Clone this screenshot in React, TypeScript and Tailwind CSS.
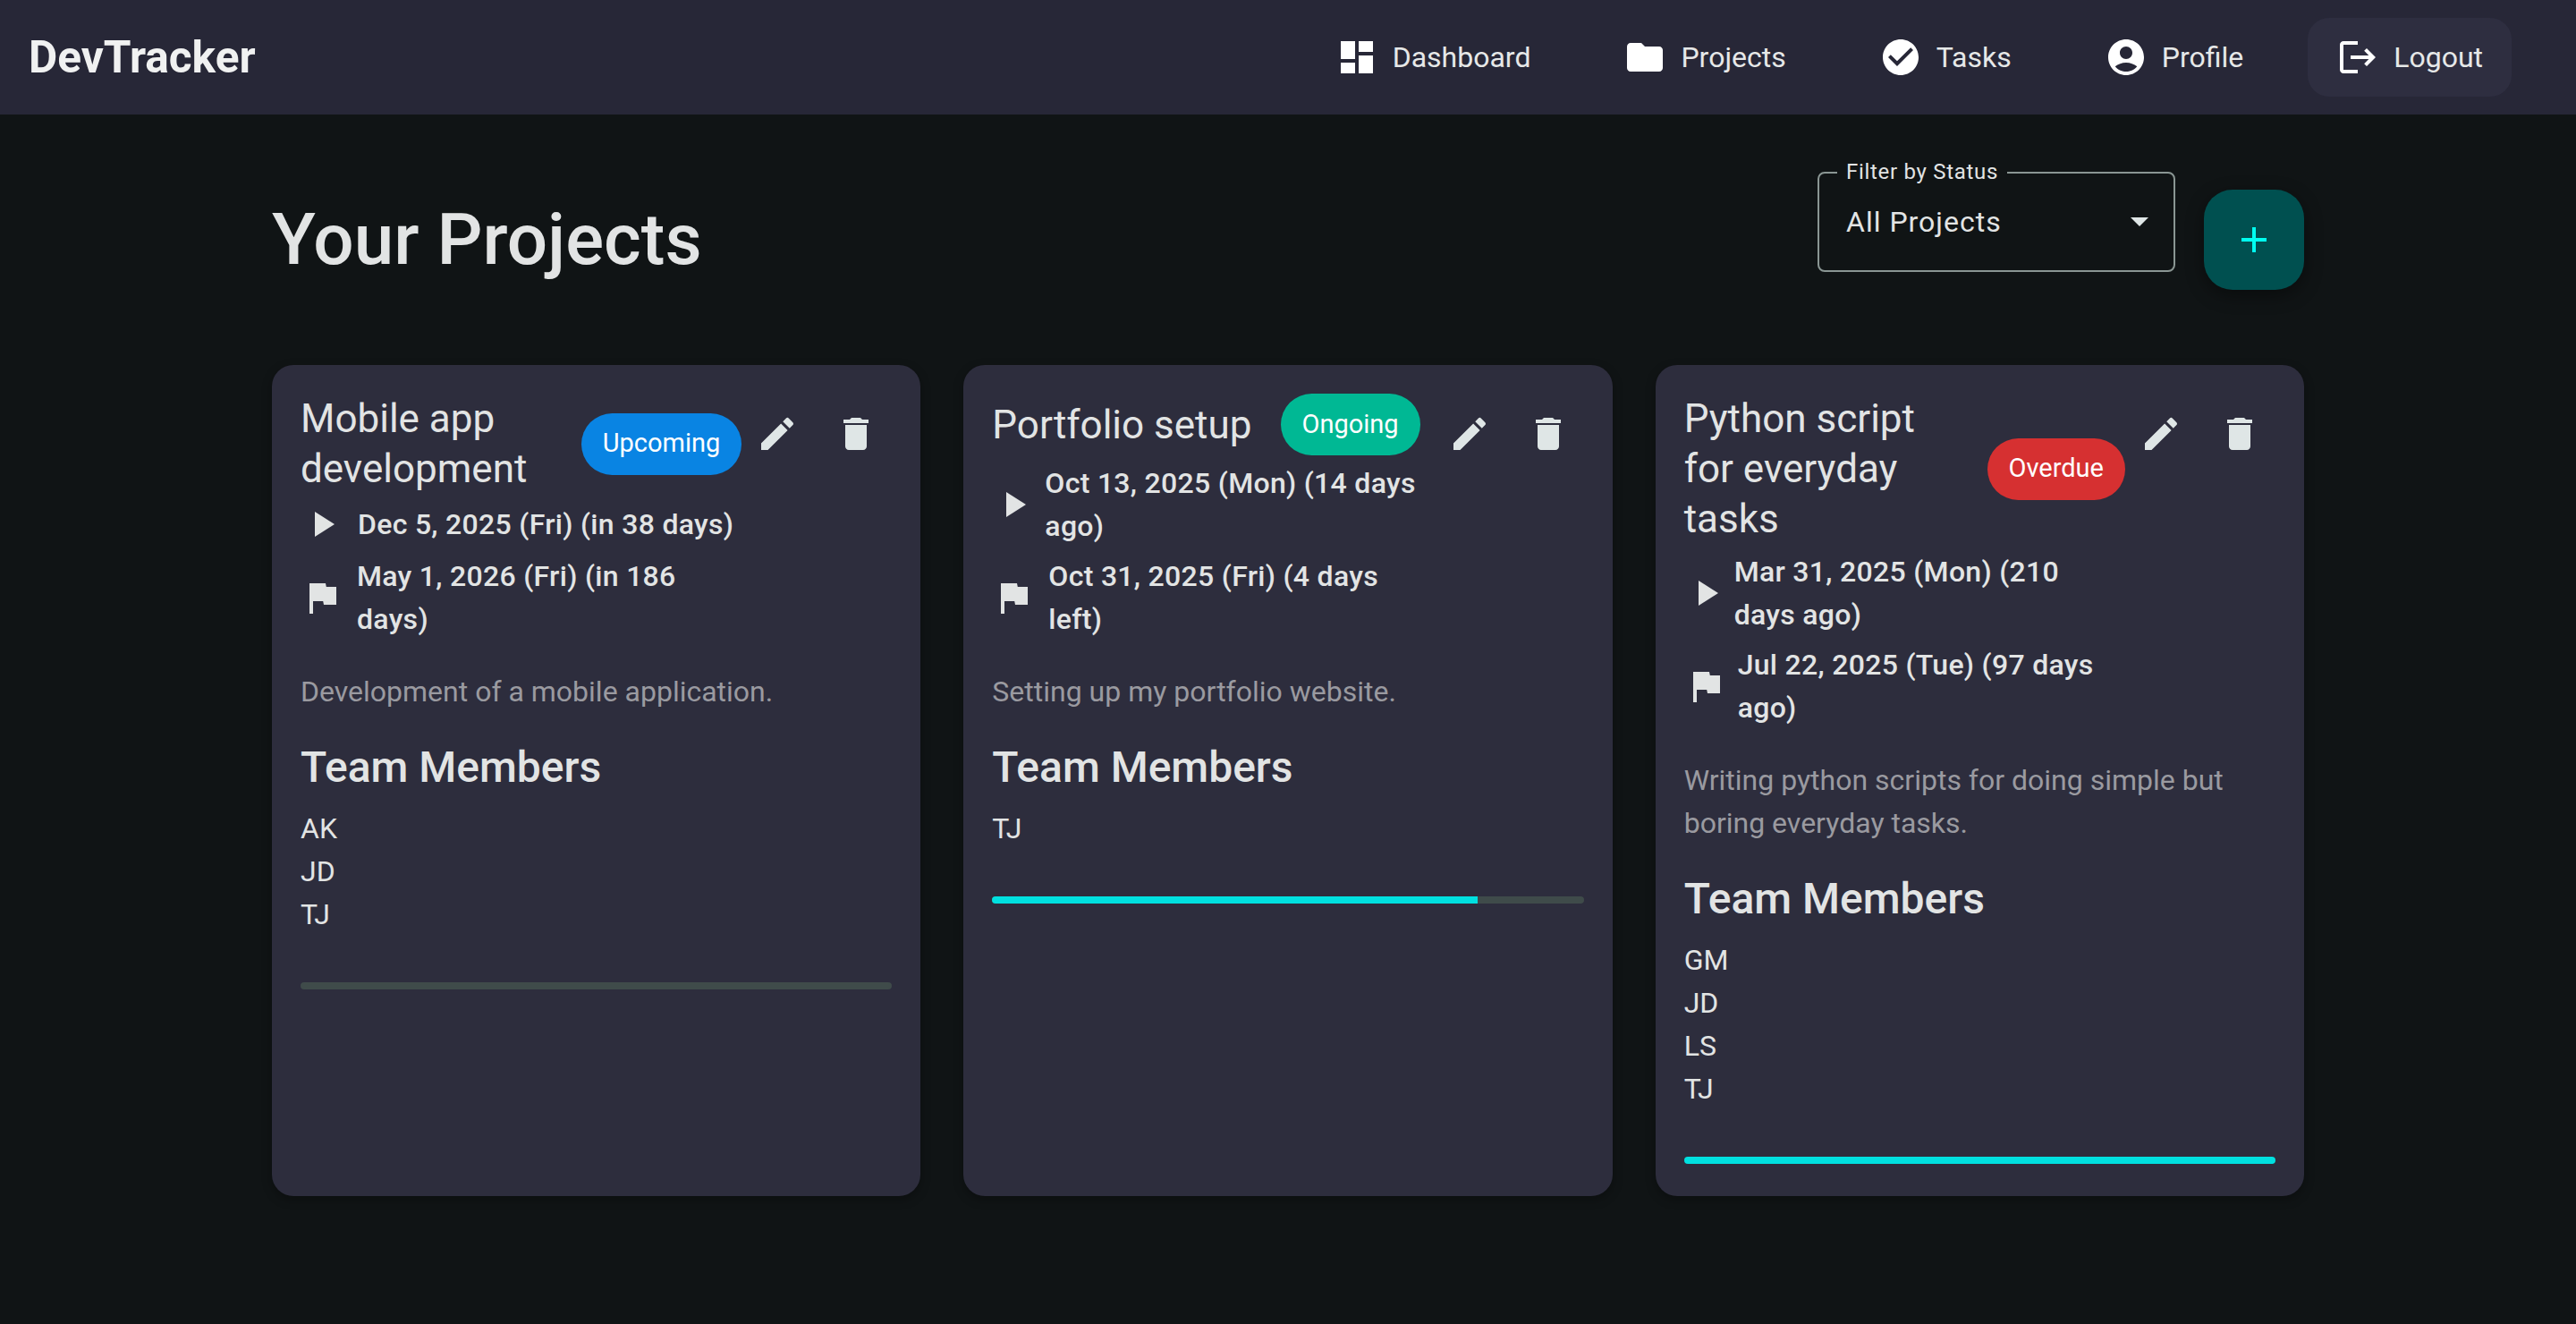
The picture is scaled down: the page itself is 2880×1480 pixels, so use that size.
import React from "react";

const P = {
  dashboard: "M3 13h8V3H3v10zm0 8h8v-6H3v6zm10 0h8V11h-8v10zm0-18v6h8V3h-8z",
  folder: "M10 4H4c-1.1 0-1.99.9-1.99 2L2 18c0 1.1.9 2 2 2h16c1.1 0 2-.9 2-2V8c0-1.1-.9-2-2-2h-8l-2-2z",
  check: "M12 2C6.48 2 2 6.48 2 12s4.48 10 10 10 10-4.48 10-10S17.52 2 12 2zm-2 15-5-5 1.41-1.41L10 14.17l7.59-7.59L19 8l-9 9z",
  account: "M12 2C6.48 2 2 6.48 2 12s4.48 10 10 10 10-4.48 10-10S17.52 2 12 2zm0 4c1.93 0 3.5 1.57 3.5 3.5S13.93 13 12 13s-3.5-1.57-3.5-3.5S10.07 6 12 6zm0 14c-2.03 0-4.43-.82-6.14-2.88C7.55 15.8 9.68 15 12 15s4.45.8 6.14 2.12C16.43 19.18 14.03 20 12 20z",
  logout: "M17 7l-1.41 1.41L18.17 11H8v2h10.17l-2.58 2.58L17 17l5-5zM4 5h8V3H4c-1.1 0-2 .9-2 2v14c0 1.1.9 2 2 2h8v-2H4V5z",
  play: "M8 5v14l11-7z",
  flag: "M14.4 6 14 4H5v17h2v-7h5.6l.4 2h7V6z",
  edit: "M3 17.25V21h3.75L17.81 9.94l-3.75-3.75L3 17.25zM20.71 7.04c.39-.39.39-1.02 0-1.41l-2.34-2.34a.9959.9959 0 0 0-1.41 0l-1.83 1.83 3.75 3.75 1.83-1.83z",
  del: "M6 19c0 1.1.9 2 2 2h8c1.1 0 2-.9 2-2V7H6v12zM19 4h-3.5l-1-1h-5l-1 1H5v2h14V4z",
  add: "M19 13h-6v6h-2v-6H5v-2h6V5h2v6h6v2z",
};

function Icon({ d, className = "" }: { d: string; className?: string }) {
  return (
    <svg viewBox="0 0 24 24" fill="currentColor" className={"w-12 h-12 shrink-0 " + className}>
      <path d={d} />
    </svg>
  );
}

function NavItem({ d, label, boxed }: { d: string; label: string; boxed?: boolean }) {
  return (
    <div className={"flex items-center gap-4 h-[88px] px-8 rounded-3xl text-[32px] " + (boxed ? "bg-[#2e2e40]" : "")}>
      <Icon d={d} className="text-white" />
      <span className="text-[#e6e8e8]">{label}</span>
    </div>
  );
}

type Row = { d: string; lines: string[]; textClass: string; rowClass?: string };
type Project = {
  title: string;
  titleClass: string;
  chip: string;
  chipClass: string;
  rows: Row[];
  desc: string[];
  members: string[];
  progress: number;
};

const projects: Project[] = [
  {
    title: "Mobile app development",
    titleClass: "w-[290px]",
    chip: "Upcoming",
    chipClass: "bg-[#0984e3]",
    rows: [
      { d: P.play, lines: ["Dec 5, 2025 (Fri) (in 38 days)"], textClass: "ml-4", rowClass: "min-h-[53px]" },
      { d: P.flag, lines: ["May 1, 2026 (Fri) (in 186", "days)"], textClass: "ml-[15px]" },
    ],
    desc: ["Development of a mobile application."],
    members: ["AK", "JD", "TJ"],
    progress: 0,
  },
  {
    title: "Portfolio setup",
    titleClass: "",
    chip: "Ongoing",
    chipClass: "bg-[#00b894] mr-[15px]",
    rows: [
      { d: P.play, lines: ["Oct 13, 2025 (Mon) (14 days", "ago)"], textClass: "ml-[11px]" },
      { d: P.flag, lines: ["Oct 31, 2025 (Fri) (4 days", "left)"], textClass: "ml-[15px]" },
    ],
    desc: ["Setting up my portfolio website."],
    members: ["TJ"],
    progress: 82,
  },
  {
    title: "Python script for everyday tasks",
    titleClass: "w-[290px]",
    chip: "Overdue",
    chipClass: "bg-[#d63031]",
    rows: [
      { d: P.play, lines: ["Mar 31, 2025 (Mon) (210", "days ago)"], textClass: "ml-2" },
      { d: P.flag, lines: ["Jul 22, 2025 (Tue) (97 days", "ago)"], textClass: "ml-3" },
    ],
    desc: ["Writing python scripts for doing simple but", "boring everyday tasks."],
    members: ["GM", "JD", "LS", "TJ"],
    progress: 100,
  },
];

function Card({ p }: { p: Project }) {
  return (
    <div className="rounded-3xl bg-[#2d2d3d] px-8 pt-8 pb-9 shadow-[0_4px_12px_rgba(0,0,0,0.3)] flex flex-col">
      <div className="flex items-start">
        <div className="flex-1 flex items-center justify-between">
          <div className={"text-[44px] leading-[56px] text-[#e2e4e4] " + p.titleClass}>{p.title}</div>
          <div className={"h-[69px] px-6 rounded-full flex items-center text-[29px] text-white " + p.chipClass}>{p.chip}</div>
        </div>
        <div className="flex gap-2 mt-[5px] -mb-4 text-[#dfe6e6]">
          <div className="p-4"><Icon d={P.edit} /></div>
          <div className="p-4"><Icon d={P.del} /></div>
        </div>
      </div>
      <div className="mt-[7px] flex flex-col gap-2">
        {p.rows.map((r) => (
          <div key={r.lines[0]} className={"flex items-center text-[#e2e4e4] " + (r.rowClass ?? "")}>
            <Icon d={r.d} />
            <div className={"text-[32px] leading-[48px] tracking-[0.3px] font-medium whitespace-nowrap " + r.textClass}>
              {r.lines.map((l) => (
                <div key={l}>{l}</div>
              ))}
            </div>
          </div>
        ))}
      </div>
      <div className="mt-[33px] text-[32px] leading-[48px] text-[#9a9aa0]">
        {p.desc.map((l) => (
          <div key={l}>{l}</div>
        ))}
      </div>
      <div className="mt-[33px] text-[48px] leading-[56px] font-medium text-[#e2e4e4]">Team Members</div>
      <div className="mt-4 text-[32px] leading-[48px] text-[#e2e4e4]">
        {p.members.map((m) => (
          <div key={m}>{m}</div>
        ))}
      </div>
      <div className="h-2 mt-[52px] rounded bg-[#3f4b4a] overflow-hidden">
        <div className="h-full bg-[#00e0e0]" style={{ width: `${p.progress}%` }} />
      </div>
    </div>
  );
}

export default function App() {
  return (
    <div className="min-h-[1480px] bg-[#101415] font-['Roboto',sans-serif]">
      <nav className="h-32 bg-[#272737] flex items-center justify-between pl-8 pr-[72px]">
        <div className="text-[49.6px] font-bold text-[#f0f1f1]">DevTracker</div>
        <div className="flex items-center gap-10">
          <NavItem d={P.dashboard} label="Dashboard" />
          <NavItem d={P.folder} label="Projects" />
          <NavItem d={P.check} label="Tasks" />
          <NavItem d={P.account} label="Profile" />
          <NavItem d={P.logout} label="Logout" boxed />
        </div>
      </nav>
      <main className="w-[2272px] mx-auto pt-16">
        <div className="flex items-center justify-between h-[216px] pb-16">
          <h1 className="text-[80px] font-medium text-[#e2e4e4]">Your Projects</h1>
          <div className="flex items-center gap-8">
            <div className="relative w-[400px] h-[112px] mb-10 rounded-lg border-2 border-[#8a9693] flex items-center justify-between pl-[30px] pr-7">
              <span className="absolute -top-[16px] left-[20px] px-2.5 bg-[#101415] text-[24px] leading-[28px] tracking-[0.7px] text-[#e2e4e4]">Filter by Status</span>
              <span className="text-[32px] tracking-[1px] text-[#e2e4e4]">All Projects</span>
              <span className="w-0 h-0 border-x-[10px] border-x-transparent border-t-[10px] border-t-[#dfe6e6]" />
            </div>
            <div className="w-[112px] h-[112px] rounded-[32px] bg-[#005050] flex items-center justify-center shadow-[0_6px_20px_rgba(0,0,0,0.4)]">
              <Icon d={P.add} className="text-[#00fff0]" />
            </div>
          </div>
        </div>
        <div className="grid grid-cols-3 gap-12">
          {projects.map((p) => (
            <Card key={p.title} p={p} />
          ))}
        </div>
      </main>
    </div>
  );
}
